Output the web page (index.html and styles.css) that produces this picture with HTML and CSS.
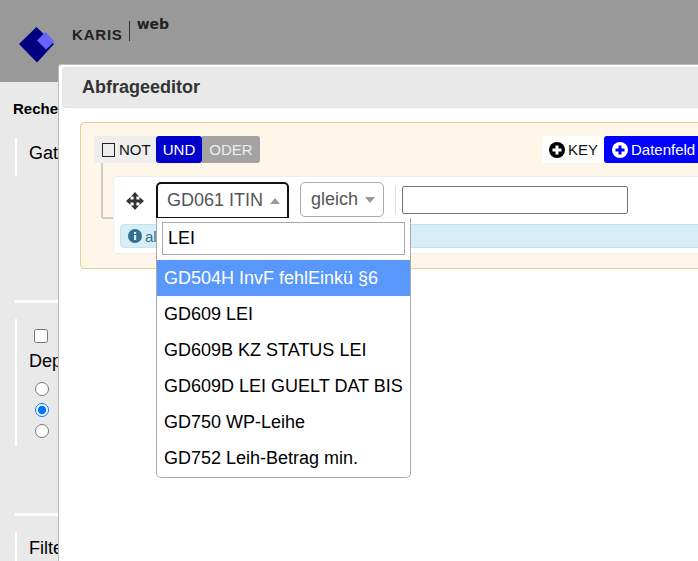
FILE: index.html
```html
<!DOCTYPE html>
<html lang="de">
<head>
<meta charset="utf-8">
<title>KARIS web</title>
<link rel="stylesheet" href="styles.css">
</head>
<body>
<div class="page">
  <header class="topbar">
    <svg class="logo" width="40" height="40" viewBox="0 0 40 40"><path d="M18.500 1 L36 18 L19 36.500 L1 18 Z" fill="#000080"/><path d="M27.500 6 L36.500 15.500 L28 23.500 L19 14.500 Z" fill="#6666ff"/></svg>
    <span class="brand">KARIS</span>
    <span class="brand-sep"></span>
    <span class="brand-web">web</span>
  </header>
  <main class="side">
    <div class="side-title">Reche</div>
    <section class="panel panel-a"><div class="panel-label">Gat</div></section>
    <hr class="rule rule-a">
    <section class="panel panel-b">
      <input class="check" type="checkbox">
      <div class="panel-label">Dep</div>
      <div class="radios">
        <input type="radio" name="d">
        <input type="radio" name="d" checked>
        <input type="radio" name="d">
      </div>
    </section>
    <hr class="rule rule-b">
    <section class="panel panel-c"><div class="panel-label">Filte</div></section>
  </main>
  <div class="modal">
    <div class="modal-head">Abfrageeditor</div>
    <div class="qb">
      <div class="qb-top">
        <div class="logic">
          <span class="not"><span class="not-box"></span>NOT</span><span class="btn und">UND</span><span class="btn oder">ODER</span>
        </div>
        <div class="adds">
          <span class="add key">
            <svg class="plus" width="16" height="16" viewBox="0 0 16 16"><circle cx="8" cy="8" r="8" fill="#000"/><path d="M8 3.500v9M3.500 8h9" stroke="#fff" stroke-width="3"/></svg>KEY</span><span class="add field">
            <svg class="plus" width="16" height="16" viewBox="0 0 16 16"><circle cx="8" cy="8" r="8" fill="#fff"/><path d="M8 3.500v9M3.500 8h9" stroke="#0000ff" stroke-width="3"/></svg>Datenfeld</span>
        </div>
      </div>
      <div class="tree"></div>
      <div class="rule-card">
        <div class="rule-row">
          <svg class="move" width="18" height="18" viewBox="0 0 18 18"><path d="M9 0 L13 4.500 H10.400 V7.600 H13.500 V5 L18 9 L13.500 13 V10.400 H10.400 V13.500 H13 L9 18 L5 13.500 H7.600 V10.400 H4.500 V13 L0 9 L4.500 5 V7.600 H7.600 V4.500 H5 Z" fill="#333"/></svg>
          <div class="sel sel-open">GD061 ITIN<span class="caret up"></span></div>
          <div class="sel sel-op">gleich<span class="caret"></span></div>
          <span class="sep"></span>
          <div class="value"></div>
        </div>
        <div class="alert">
          <svg width="14" height="14" viewBox="0 0 14 14"><circle cx="7" cy="7" r="7" fill="#31708f"/><rect x="6" y="6" width="2.200" height="5" fill="#d9edf7"/><rect x="6" y="3" width="2.200" height="2" fill="#d9edf7"/></svg>
          <span>al</span>
        </div>
      </div>
    </div>
    <div class="drop">
      <div class="drop-search">LEI</div>
      <ul class="drop-list">
        <li class="active">GD504H InvF fehlEinkü §6</li>
        <li>GD609 LEI</li>
        <li>GD609B KZ STATUS LEI</li>
        <li>GD609D LEI GUELT DAT BIS</li>
        <li>GD750 WP-Leihe</li>
        <li>GD752 Leih-Betrag min.</li>
      </ul>
    </div>
  </div>
</div>
</body>
</html>
```
FILE: styles.css
```css
* { box-sizing: border-box; }
html, body { margin: 0; padding: 0; }
body { font-family: "Liberation Sans", Arial, sans-serif; color: #000; background: #e9e9e9; }
.page { position: relative; width: 698px; height: 561px; overflow: hidden; background: #e9e9e9; }

.topbar { height: 82px; background: #999; position: relative; display: flex; align-items: flex-start; padding: 25px 0 0 18px; }
.logo { display: block; flex: none; margin-top: 1px; }
.brand { margin: 0 0 0 14px; padding-top: 1px; font: bold 15px/18px "Liberation Sans", sans-serif; letter-spacing: 0.8px; color: #222; }
.brand-sep { width: 1px; height: 20px; background: #333; margin: -4px 0 0 6px; }
.brand-web { font: bold 14px/16px "DejaVu Sans", sans-serif; color: #222; margin: -9px 0 0 7px; }

.side { padding: 19px 0 0 13px; }
.side-title { font: bold 15px/16px "Liberation Sans", sans-serif; margin-bottom: 21px; }
.panel { border-left: 2px solid #fff; margin-left: 2px; padding-left: 12px; }
.panel-a { height: 38px; padding-top: 5px; }
.panel-label { font-size: 18px; line-height: 20px; }
.rule { border: 0; height: 3px; background: #fff; margin: 0 0 0 2px; }
.rule-a { margin-top: 124px; }
.panel-b { margin-top: 16px; height: 127px; padding-top: 10px; }
.check { display: block; width: 14px; height: 14px; margin: 0 0 8px 5px; }
.radios { display: flex; flex-direction: column; gap: 7px; margin: 11px 0 0 6px; }
.radios input { display: block; width: 14px; height: 14px; margin: 0; }
.rule-b { margin-top: 67px; }
.panel-c { margin-top: 16px; height: 40px; padding-top: 6px; }

.modal { position: absolute; left: 58px; top: 64px; width: 660px; height: 520px; background: #fff; border: 1px solid #bbb; border-radius: 3px 0 0 0; padding: 2px 3px; }
.modal-head { height: 41px; background: #e9e9e9; border: 1px solid #e2e2e2; border-radius: 3px; padding: 0 0 0 19px; font: bold 18px/39px "Liberation Sans", sans-serif; color: #333; }

.qb { position: relative; margin: 14px 0 0 18px; height: 147px; width: 680px; background: #fdf6e9; border: 1px solid #e3cf9b; border-radius: 4px; padding: 13px 0 0 13px; }
.qb-top { display: flex; justify-content: space-between; width: 630px; height: 27px; }
.logic { display: flex; font-size: 15px; line-height: 27px; }
.not { display: flex; align-items: center; width: 62px; height: 27px; padding-left: 8px; background: #eee; border-radius: 3px 0 0 3px; color: #111; }
.not-box { width: 13px; height: 14px; border: 1.500px solid #222; margin-right: 4px; }
.btn { display: block; height: 27px; text-align: center; }
.und { width: 46px; background: #0000cd; color: #fff; border-radius: 3px; }
.oder { width: 58px; background: #a3a3a3; color: #eee; border-radius: 0 3px 3px 0; }
.adds { display: flex; font-size: 15px; line-height: 27px; }
.add { display: flex; align-items: center; height: 27px; white-space: nowrap; }
.plus { margin-right: 3px; flex: none; }
.key { width: 62px; padding-left: 7px; background: #fff; border-radius: 3px 0 0 3px; color: #111; }
.field { width: 120px; padding-left: 8px; background: #0000ff; color: #fff; border-radius: 3px 0 0 3px; }

.tree { position: absolute; left: 20px; top: 40px; width: 13px; height: 56px; border: 2px solid #ccc; border-top: 0; border-right: 0; border-radius: 0 0 0 3px; }
.rule-card { position: relative; margin: 13px 0 0 19px; width: 640px; height: 78px; background: #fff; border: 1px solid #eee; border-radius: 4px; padding: 5px 0 0 6px; }
.rule-row { display: flex; align-items: flex-start; height: 37px; padding-left: 6px; }
.move { flex: none; margin: 10px 0 0 0; }
.sel { display: flex; align-items: center; height: 35px; background: #fff; font-size: 18px; color: #555; border-radius: 5px; }
.sel-open { width: 133px; height: 36px; margin-left: 12px; padding-left: 9px; border: 2px solid #111; border-bottom-width: 1px; border-radius: 5px 5px 0 0; }
.sel-op { width: 84px; margin-left: 11px; padding-left: 10px; border: 1px solid #aaa; }
.caret { width: 0; height: 0; margin-left: 7px; border: 5px solid transparent; border-top: 6px solid #999; border-bottom: 0; }
.caret.up { border-top: 0; border-bottom: 6px solid #999; }
.sep { width: 1px; height: 28px; margin: 4px 6px 0 11px; background: #ddd; }
.value { width: 226px; height: 28px; margin-top: 4px; border: 1px solid #767676; border-radius: 2px; background: #fff; }
.alert { display: flex; align-items: center; gap: 3px; margin: 5px 0 0 0; height: 24px; padding-left: 7px; background: #d9edf7; border: 1px solid #bce8f1; border-radius: 4px; font-size: 15px; color: #31708f; }

.drop { position: absolute; left: 97px; top: 153px; width: 255px; height: 260px; background: #fff; border: 1px solid #aaa; border-top: 0; border-radius: 0 0 5px 5px; padding-top: 4px; }
.drop-search { height: 33px; margin: 0 5px 5px 5px; border: 1px solid #aaa; padding-left: 5px; font-size: 18px; line-height: 31px; }
.drop-list { list-style: none; margin: 0; padding: 0; }
.drop-list li { height: 36px; padding-left: 7px; font-size: 18px; line-height: 36px; white-space: nowrap; color: #000; }
.drop-list li.active { background: #5897fb; color: #fff; }
```
